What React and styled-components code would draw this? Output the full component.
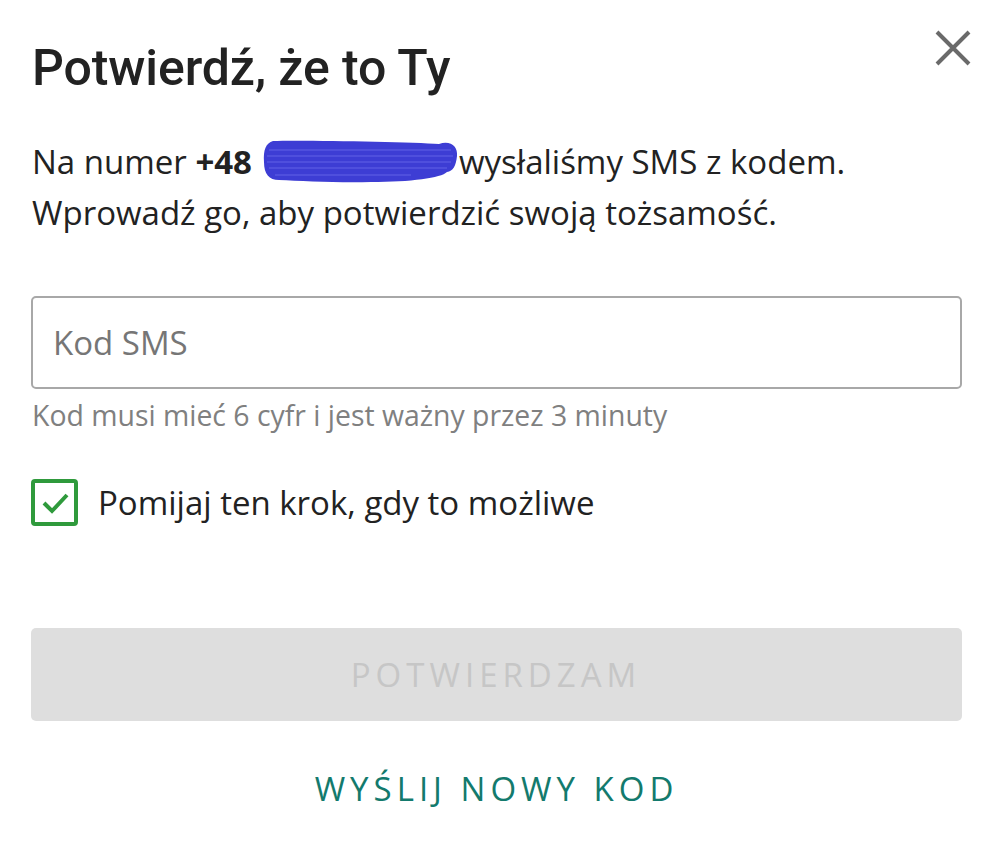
import styled, { createGlobalStyle } from "styled-components";

const GlobalStyle = createGlobalStyle`
  body {
    margin: 0;
    background: #ffffff;
    font-family: "Open Sans", "Liberation Sans", sans-serif;
    color: #222222;
  }
`;

const Page = styled.div`
  display: flex;
  flex-direction: column;
  padding: 30px 37px 40px 31px;
`;

const Header = styled.div`
  display: flex;
  justify-content: space-between;
  align-items: flex-start;
`;

const Title = styled.h1`
  margin: 9px 0 0 1px;
  font-family: Roboto, "Liberation Sans", sans-serif;
  font-weight: 500;
  font-size: 50px;
  line-height: 58px;
  color: #222222;
  letter-spacing: -0.1px;
`;

const CloseButton = styled.button`
  display: flex;
  margin-right: -10px;
  padding: 0;
  border: none;
  background: none;
  cursor: pointer;
`;

const Text = styled.p`
  margin: 39px 0 0 1px;
  font-size: 33px;
  line-height: 51px;
  color: #222222;
`;

const Bold = styled.b`
  font-weight: 700;
`;

const Redacted = styled.svg`
  vertical-align: -10px;
  margin-left: 9px;
`;

const Input = styled.input`
  box-sizing: border-box;
  margin-top: 58px;
  width: 100%;
  height: 93px;
  padding: 0 20px;
  border: 2px solid #a8a8a8;
  border-radius: 5px;
  font-family: "Open Sans", "Liberation Sans", sans-serif;
  font-size: 33px;
  color: #222;

  &::placeholder {
    color: #767676;
  }

  &:focus {
    outline: none;
  }
`;

const Hint = styled.div`
  margin: 8px 0 0 1px;
  font-size: 28.4px;
  line-height: 36px;
  color: #808080;
`;

const CheckRow = styled.label`
  display: flex;
  align-items: center;
  gap: 20px;
  margin-top: 46px;
  font-size: 33px;
  line-height: 47px;
  color: #222222;
`;

const Box = styled.span`
  box-sizing: border-box;
  display: flex;
  align-items: center;
  justify-content: center;
  width: 47px;
  height: 47px;
  border: 4px solid #2f9a3c;
  border-radius: 4px;
`;

const Primary = styled.button`
  margin-top: 102px;
  height: 93px;
  border: none;
  border-radius: 5px;
  background: #dedede;
  color: #c6c6c6;
  font-family: "Open Sans", "Liberation Sans", sans-serif;
  font-size: 33px;
  letter-spacing: 5px;
  padding-left: 5px;
`;

const LinkButton = styled.button`
  align-self: center;
  margin-top: 48px;
  border: none;
  background: none;
  padding: 0 0 0 5px;
  margin-right: 5px;
  font-family: "Open Sans", "Liberation Sans", sans-serif;
  font-size: 33px;
  line-height: 40px;
  letter-spacing: 5px;
  color: #137a6d;
`;

export default function App() {
  return (
    <>
      <GlobalStyle />
      <Page>
        <Header>
          <Title>Potwierdź, że to Ty</Title>
          <CloseButton aria-label="Zamknij">
            <svg width="38" height="36" viewBox="0 0 38 36">
              <path d="M3 2 L35 34 M35 2 L3 34" stroke="#6a6a6a" strokeWidth="4" strokeLinecap="butt" />
            </svg>
          </CloseButton>
        </Header>
        <Text>
          Na numer <Bold>+48</Bold>
          <Redacted width="198" height="46" viewBox="0 0 198 46">
            <path
              d="M12 3 C40 2 150 4 178 6 C190 2 197 9 196 18 C195 28 192 33 186 34 C180 40 150 44 110 44 C80 45 40 43 18 42 C8 42 3 36 3 24 C2 12 5 5 12 3 Z"
              fill="#3d3dd4"
            />
            <path
              d="M8 12 H190 M6 18 H192 M6 24 H190 M8 30 H186 M14 37 H150"
              stroke="#5656e0"
              strokeWidth="1.5"
              fill="none"
            />
          </Redacted>
          wysłaliśmy SMS z kodem.
          <br />
          Wprowadź go, aby potwierdzić swoją tożsamość.
        </Text>
        <Input placeholder="Kod SMS" />
        <Hint>Kod musi mieć 6 cyfr i jest ważny przez 3 minuty</Hint>
        <CheckRow>
          <Box>
            <svg width="30" height="30" viewBox="0 0 30 30">
              <path d="M4 15 L12 23 L27 7" stroke="#2f9a3c" strokeWidth="4" fill="none" />
            </svg>
          </Box>
          Pomijaj ten krok, gdy to możliwe
        </CheckRow>
        <Primary disabled>POTWIERDZAM</Primary>
        <LinkButton>WYŚLIJ NOWY KOD</LinkButton>
      </Page>
    </>
  );
}
